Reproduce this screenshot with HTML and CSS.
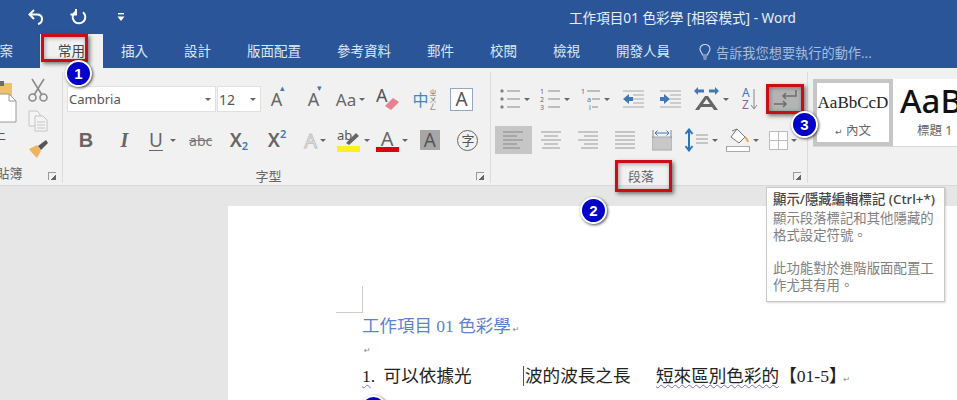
FILE: index.html
```html
<!DOCTYPE html>
<html lang="zh-Hant">
<head>
  <meta charset="UTF-8" />
  <title>工作項目01 色彩學 - Word</title>
  <link rel="stylesheet" href="styles.css">
</head>
<body>

  <header class="titlebar">
    <svg class="qat-undo" width="18" height="18" viewBox="0 0 18 18" fill="none" stroke="#fff" stroke-width="2"><path d="M7 2 L2.5 6.5 L7 11"/><path d="M3 6.5 H10 C14 6.5 15 9 15 11 C15 13.5 13.5 15.5 11 16"/></svg>
    <svg class="qat-redo" width="18" height="18" viewBox="0 0 18 18" fill="none" stroke="#fff" stroke-width="2"><path d="M5.5 3.8 A6.3 6.3 0 1 0 13 4.2"/><path d="M7 1 V6.5 H1.5" transform="translate(-1 0)"/></svg>
    <svg class="qat-more" width="8" height="9" viewBox="0 0 8 9" fill="#fff"><rect x="1" y="0" width="6" height="1.4"/><path d="M0.5 3.5 H7.5 L4 8 Z"/></svg>
    <div class="doc-title">工作項目01 色彩學 [相容模式] - Word</div>
  </header>

  <nav class="tabs">
    <span class="tab tab-file">檔案</span>
    <span class="tab active">常用</span>
    <span class="tab">插入</span>
    <span class="tab">設計</span>
    <span class="tab">版面配置</span>
    <span class="tab">參考資料</span>
    <span class="tab">郵件</span>
    <span class="tab">校閱</span>
    <span class="tab">檢視</span>
    <span class="tab">開發人員</span>
    <span class="tell">
      <svg width="12" height="17" viewBox="0 0 12 17" fill="none" stroke="#c3d0e4" stroke-width="1.2"><path d="M3.5 11 C3 8.5 1 7.5 1 5 A5 4.5 0 0 1 11 5 C11 7.5 9 8.5 8.5 11 Z"/><path d="M4 13 H8 M4.5 15 H7.5"/></svg>
      告訴我您想要執行的動作...
    </span>
  </nav>

  <section class="ribbon">

    <div class="group group-clip">
      <div class="clip-body">
        <div class="paste">
          <svg width="37" height="42" viewBox="0 0 37 42"><rect x="2" y="2" width="30" height="30" fill="#eec06a"/><rect x="16" y="0" width="8" height="5" fill="#6b6b6b"/><path d="M8 13 H29 L36 20 V41 H8 Z" fill="#fff" stroke="#9a9a9a"/><path d="M29 13 V20 H36" fill="none" stroke="#9a9a9a"/></svg>
          <span>貼上</span>
        </div>
        <div class="clip-tools">
          <svg width="20" height="24" viewBox="0 0 20 24" fill="none" stroke="#8b8b8b" stroke-width="1.6"><path d="M4 1 L14 17 M16 1 L6 17"/><circle cx="4.5" cy="19.5" r="3.5"/><circle cx="15.5" cy="19.5" r="3.5"/></svg>
          <svg width="20" height="22" viewBox="0 0 20 22" fill="#f4f4f4" stroke="#c4c4c4"><path d="M1 1 H9 L12 4 V16 H1 Z"/><path d="M7 6 H15 L19 10 V21 H7 Z"/><path d="M9 12 H17 M9 15 H17 M9 18 H17"/></svg>
          <svg width="20" height="19" viewBox="0 0 20 19"><path d="M1 9 L9 5 L13 11 L9 18 C6 15 3 12 1 9 Z" fill="#eeb55f"/><path d="M10 6 L18 0 L20 3 L13 10 Z" fill="#555"/></svg>
        </div>
      </div>
      <div class="group-label label-clip">剪貼簿</div>
      <i class="launcher"></i>
    </div>

    <div class="group group-font">
      <div class="row">
        <div class="combo combo-name">Cambria<i class="caret"></i></div>
        <div class="combo combo-size">12<i class="caret"></i></div>
        <span class="tool glyph big">A<sup class="mark-up">▴</sup></span>
        <span class="tool glyph big">A<sup class="mark-down">▾</sup></span>
        <span class="tool glyph">Aa<i class="caret"></i></span>
        <span class="tool">
          <svg width="24" height="24" viewBox="0 0 24 24"><text x="0" y="15" font-size="18" fill="#555" font-family="Noto Sans">A</text><path d="M9 19 L17 11 L23 15 L15 23 Z" fill="#e97f90"/></svg>
        </span>
        <span class="tool ruby">中<small>ㄓㄨㄥ</small></span>
        <span class="tool"><span class="boxed-a">A</span></span>
      </div>
      <div class="row row-eleven">
        <span class="tool glyph strong">B</span>
        <span class="tool glyph strong slant">I</span>
        <span class="tool glyph under">U<i class="caret"></i></span>
        <span class="tool strike">abc</span>
        <span class="tool glyph strong-x">X<sub>2</sub></span>
        <span class="tool glyph strong-x">X<sup>2</sup></span>
        <span class="tool glyph ghost">A<i class="caret"></i></span>
        <span class="tool">
          <svg width="24" height="24" viewBox="0 0 24 24"><text x="0" y="12" font-size="13" fill="#555" font-family="Noto Sans">ab</text><path d="M9 15 L19 5 L22 8 L12 17 Z" fill="#666"/><rect x="0" y="18" width="23" height="6" fill="#ffef1e"/></svg>
          <i class="caret"></i>
        </span>
        <span class="tool color-a"><span class="color-a-bar">A</span><i class="caret"></i></span>
        <span class="tool"><span class="shade-a">A</span></span>
        <span class="tool"><span class="circle-char">字</span></span>
      </div>
      <div class="group-label">字型</div>
      <i class="launcher"></i>
    </div>

    <div class="group group-para">
      <div class="row">
        <span class="tool w40">
          <svg width="21" height="24" viewBox="0 0 21 24" fill="#666" stroke="#888"><circle cx="2" cy="4" r="1.2"/><circle cx="2" cy="12" r="1.2"/><circle cx="2" cy="20" r="1.2"/><path d="M7 4 H20 M7 12 H20 M7 20 H20"/></svg>
          <i class="caret"></i>
        </span>
        <span class="tool w40">
          <svg width="21" height="24" viewBox="0 0 21 24" fill="none" stroke="#888"><path d="M8 4 H20 M8 12 H20 M8 20 H20"/><text x="0" y="7" font-size="7" fill="#666" stroke="none">1</text><text x="0" y="15" font-size="7" fill="#666" stroke="none">2</text><text x="0" y="23" font-size="7" fill="#666" stroke="none">3</text></svg>
          <i class="caret"></i>
        </span>
        <span class="tool w40">
          <svg width="20" height="24" viewBox="0 0 20 24" fill="none" stroke="#888"><path d="M6 4 H19 M11 12 H19 M11 20 H17"/><text x="0" y="7" font-size="7" fill="#666" stroke="none">1</text><text x="6" y="15" font-size="7" fill="#3f78b5" stroke="none">a</text><text x="8" y="23" font-size="7" fill="#666" stroke="none">i</text></svg>
          <i class="caret"></i>
        </span>
        <span class="tool">
          <svg width="21" height="18" viewBox="0 0 21 18" fill="none" stroke="#a8a8a8"><path d="M0 1 H21 M10 5 H21 M10 9 H21 M10 13 H21 M0 17 H21"/><path d="M0 9 L6 4 V7 H10 V11 H6 V14 Z" fill="#3f78b5" stroke="none"/></svg>
        </span>
        <span class="tool">
          <svg width="21" height="18" viewBox="0 0 21 18" fill="none" stroke="#a8a8a8"><path d="M0 1 H21 M10 5 H21 M10 9 H21 M10 13 H21 M0 17 H21"/><path d="M10 9 L4 4 V7 H0 V11 H4 V14 Z" fill="#3f78b5" stroke="none"/></svg>
        </span>
        <span class="tool w44">
          <svg width="27" height="24" viewBox="0 0 27 24"><path d="M2 23 L12 9 H15 L25 23 H21 L19 20 H8 L6 23 Z M10 17 H17 L13.5 12 Z" fill="#666" fill-rule="evenodd"/><path d="M1 4 L5 0 V2.5 H11 V5.5 H5 V8 Z M26 4 L22 0 V2.5 H16 V5.5 H22 V8 Z" fill="#3f78b5"/></svg>
          <i class="caret"></i>
        </span>
        <span class="tool w33">
          <svg width="16" height="24" viewBox="0 0 16 24" fill="none"><text x="0" y="10" font-size="12" fill="#3f78b5" font-family="Noto Sans">A</text><text x="0" y="22" font-size="12" fill="#8e5f9e" font-family="Noto Sans">Z</text><path d="M12 2 V21 M9 18 L12 22 L15 18" stroke="#888"/></svg>
        </span>
        <span class="tool tool-on">
          <svg width="24" height="20" viewBox="0 0 24 20" fill="none" stroke="#6e6e6e" stroke-width="1.5"><path d="M23 1 V7 H10 M13 4 L10 7 L13 10"/><path d="M1 15 H13 M10 12 L13 15 L10 18"/></svg>
        </span>
      </div>
      <div class="row">
        <span class="tool selected">
          <svg width="21" height="18" viewBox="0 0 21 18" stroke="#888"><path d="M0 1 H20 M0 5 H14 M0 9 H20 M0 13 H14 M0 17 H17"/></svg>
        </span>
        <span class="tool">
          <svg width="20" height="18" viewBox="0 0 20 18" stroke="#999"><path d="M0 1 H20 M3 5 H17 M0 9 H20 M3 13 H17 M1 17 H19"/></svg>
        </span>
        <span class="tool">
          <svg width="20" height="18" viewBox="0 0 20 18" stroke="#999"><path d="M0 1 H20 M6 5 H20 M0 9 H20 M6 13 H20 M3 17 H20"/></svg>
        </span>
        <span class="tool">
          <svg width="20" height="18" viewBox="0 0 20 18" stroke="#999"><path d="M0 1 H20 M0 5 H20 M0 9 H20 M0 13 H20 M0 17 H20"/></svg>
        </span>
        <span class="tool">
          <svg width="20" height="22" viewBox="0 0 20 22" fill="none"><rect x="0" y="8" width="20" height="13" fill="#c8c8c8" stroke="#aaa"/><path d="M1 9 V1 M19 9 V1" stroke="#888"/><path d="M3 4 H17 M5.5 1.5 L3 4 L5.5 6.5 M14.5 1.5 L17 4 L14.5 6.5" stroke="#3f78b5"/></svg>
        </span>
        <span class="tool w42">
          <svg width="24" height="24" viewBox="0 0 24 24" fill="none"><path d="M4 2 V22 M0.5 6 L4 1.5 L7.5 6 M0.5 18 L4 22.5 L7.5 18" stroke="#2e74b5" stroke-width="2"/><path d="M11 7 H23 M11 11 H23 M11 15 H23" stroke="#999"/></svg>
          <i class="caret"></i>
        </span>
        <span class="tool w40">
          <svg width="24" height="24" viewBox="0 0 24 24" fill="none"><path d="M11 1 L19 9 L13 15 L5 9 Z" fill="#fff" stroke="#777"/><path d="M6 3 L11 1" stroke="#777"/><path d="M19 9 C21 11 22 12 22 14" stroke="#e5a950" stroke-width="2"/><rect x="0.5" y="18.5" width="23" height="5" fill="#fff" stroke="#aaa"/></svg>
          <i class="caret"></i>
        </span>
        <span class="tool w41">
          <svg width="19" height="19" viewBox="0 0 19 19" fill="#fff" stroke="#bcbcbc"><rect x="0.5" y="0.5" width="18" height="18"/><path d="M9.5 0 V19 M0 9.5 H19"/></svg>
          <i class="caret"></i>
        </span>
      </div>
      <div class="group-label">段落</div>
      <i class="launcher"></i>
    </div>

    <div class="group-styles">
      <div class="gallery">
        <div class="style-card current">
          <div class="sample-normal">AaBbCcD</div>
          <div class="style-name"><span class="return">↵</span> 內文</div>
        </div>
        <div class="style-card">
          <div class="sample-heading">AaBl</div>
          <div class="style-name heading-name">標題 1</div>
        </div>
      </div>
    </div>

  </section>

  <main class="workspace">
    <article class="page">
      <i class="crop-mark"></i>
      <h1 class="doc-heading">工作項目 01 色彩學<span class="pmark">↵</span></h1>
      <p class="doc-empty"><span class="pmark">↵</span></p>
      <p class="doc-line">
        <span class="list-no"><span class="wavy">1</span>.</span> 可以依據光
        <span class="after-gap">波的波長之長</span>
        <span class="after-gap-small"><span class="wavy">短來區別色彩的</span>【01-5】<span class="pmark tight">↵</span></span>
      </p>
      <div class="badge badge-4"></div>
    </article>
  </main>

  <!-- annotations on top of the screenshot -->
  <div class="red-box box-tab"></div>
  <div class="red-box box-para"></div>
  <div class="red-box box-mark"></div>
  <div class="badge badge-1">1</div>
  <div class="badge badge-2">2</div>
  <div class="badge badge-3">3</div>

  <div class="tooltip">
    <div class="tooltip-title">顯示/隱藏編輯標記 (Ctrl+*)</div>
    <p>顯示段落標記和其他隱藏的格式設定符號。</p>
    <p>此功能對於進階版面配置工作尤其有用。</p>
  </div>

</body>
</html>
```

FILE: styles.css
```css
html,
body {
  margin: 0;
  height: 400px;
  overflow: hidden;
}

body {
  position: relative;
  font-family: "Noto Sans", "Noto Sans CJK TC", sans-serif;
  font-size: 13px;
  background-color: #e6e6e6;
  color: #555;
}

/* title bar */
.titlebar {
  height: 34px;
  display: flex;
  align-items: center;
  background-color: #2a5699;
  color: #e8eef7;
}

.qat-undo {
  margin-left: 27px;
}

.qat-redo {
  margin-left: 25px;
}

.qat-more {
  margin-left: 29px;
}

.doc-title {
  margin-left: 444px;
  font-size: 13.6px;
  white-space: nowrap;
}

/* tabs */
.tabs {
  height: 34px;
  display: flex;
  align-items: center;
  background-color: #2a5699;
  color: #dfe7f2;
  font-size: 13.5px;
  white-space: nowrap;
}

.tab {
  height: 34px;
  line-height: 35px;
  padding: 0 18px;
}

.tab-file {
  margin-left: -32px;
  margin-right: 9px;
}

.tab.active {
  background-color: #f1f1f1;
  color: #444;
}

.tell {
  display: flex;
  align-items: center;
  gap: 5px;
  margin-left: 11px;
  padding-top: 2px;
  color: #a9bcd8;
  font-size: 13.2px;
}

/* ribbon */
.ribbon {
  height: 117px;
  display: flex;
  background-color: #f1f1f1;
  border-bottom: 1px solid #d8d8d8;
}

.group {
  position: relative;
  display: flex;
  flex-direction: column;
  box-sizing: border-box;
  margin: 4px 0 2px;
  padding-top: 13px;
  border-right: 1px solid #dcdcdc;
}

.group-clip {
  width: 83px;
  margin-left: -20px;
  padding-top: 0;
}

.group-font {
  width: 428px;
  padding-left: 4px;
}

.group-para {
  width: 317px;
  padding-left: 4px;
}

.group-label {
  margin-top: auto;
  padding: 0 20px 1px 0;
  text-align: center;
  color: #666;
  line-height: 18px;
}

.label-clip {
  padding-right: 36px;
}

.launcher {
  position: absolute;
  right: 6px;
  bottom: 3px;
  width: 7px;
  height: 7px;
  border-left: 1px solid #999;
  border-top: 1px solid #999;
  background: linear-gradient(135deg, transparent 60%, #666 60%);
}

.row {
  display: flex;
  align-items: center;
  height: 28px;
  margin-bottom: 13px;
}

.row-eleven {
  display: grid;
  grid-template-columns: repeat(11, 38.2px);
}

.tool {
  width: 37px;
  height: 28px;
  display: flex;
  align-items: center;
  justify-content: center;
  gap: 3px;
  flex-shrink: 0;
}

.row-eleven .tool {
  width: auto;
}

.w33 { width: 33px; }
.w40 { width: 40px; }
.w41 { width: 41px; }
.w42 { width: 42px; }
.w44 { width: 44px; }

.tool.selected {
  background-color: #c6c6c6;
}

.tool.tool-on {
  background-color: #b4b4b4;
}

.caret {
  display: inline-block;
  width: 0;
  height: 0;
  border-left: 3px solid transparent;
  border-right: 3px solid transparent;
  border-top: 3px solid #666;
  flex-shrink: 0;
}

/* clipboard */
.clip-body {
  display: flex;
  height: 96px;
}

.paste {
  width: 44px;
  padding-top: 9px;
  line-height: 18px;
}

.paste svg {
  display: block;
  margin-bottom: 2px;
}

.clip-tools {
  display: flex;
  flex-direction: column;
  align-items: center;
  gap: 8px;
  margin-left: 4px;
  padding-top: 6px;
}

/* font group */
.combo {
  height: 26px;
  box-sizing: border-box;
  display: flex;
  align-items: center;
  justify-content: space-between;
  padding: 0 4px 0 1px;
  background-color: #fff;
  border: 1px solid #e0e0e0;
  color: #555;
  font-size: 13px;
}

.combo-name {
  width: 149px;
  margin-right: 1px;
}

.combo-size {
  width: 44px;
  margin-right: -3px;
  font-size: 14px;
}

.glyph {
  color: #666;
  font-size: 17px;
}

.big {
  position: relative;
  font-size: 18px;
}

.mark-up,
.mark-down {
  position: absolute;
  top: -2px;
  left: 22px;
  font-size: 9px;
  color: #3f78b5;
  line-height: 10px;
}

.strong {
  font-family: "Liberation Sans", sans-serif;
  font-weight: bold;
  font-size: 20px;
}

.slant {
  font-family: "Liberation Serif", serif;
  font-style: italic;
}

.under {
  gap: 7px;
  font-size: 19px;
  text-decoration: underline;
  text-underline-offset: 3px;
}

.strike {
  color: #777;
  font-size: 14px;
  text-decoration: line-through;
}

.strong-x {
  font-weight: 600;
  font-size: 19px;
  gap: 0;
}

.strong-x sub,
.strong-x sup {
  color: #3f78b5;
  font-size: 11px;
  line-height: 12px;
}

.strong-x sub {
  align-self: flex-end;
  margin-bottom: 2px;
}

.strong-x sup {
  align-self: flex-start;
  margin-top: 2px;
}

.ghost {
  color: #f1f1f1;
  font-size: 20px;
  -webkit-text-stroke: 1px #c4c4c4;
}

.color-a {
  color: #666;
  font-size: 20px;
}

.color-a-bar {
  width: 23px;
  height: 24px;
  line-height: 21px;
  box-sizing: border-box;
  text-align: center;
  border-bottom: 5px solid #e00000;
}

.ruby {
  color: #3f8ab5;
  font-size: 16px;
  gap: 1px;
}

.ruby small {
  width: 7px;
  font-size: 7px;
  line-height: 7px;
  color: #666;
}

.boxed-a {
  width: 21px;
  height: 21px;
  line-height: 21px;
  text-align: center;
  border: 1px solid #93a7c3;
  background-color: #fff;
  color: #555;
  font-size: 19px;
}

.shade-a {
  width: 20px;
  height: 20px;
  line-height: 20px;
  text-align: center;
  background-color: #a6a6a6;
  color: #555;
  font-size: 19px;
}

.circle-char {
  width: 19px;
  height: 19px;
  line-height: 18px;
  text-align: center;
  border: 1px solid #666;
  border-radius: 50%;
  color: #555;
  font-size: 13px;
}

/* styles gallery */
.group-styles {
  padding: 11px 0 0 5px;
  flex: 1;
  min-width: 0;
}

.gallery {
  display: flex;
  height: 67px;
  background-color: #fff;
  border-bottom: 1px solid #d8d8d8;
  overflow: hidden;
}

.style-card {
  width: 72px;
  flex-shrink: 0;
  text-align: center;
}

.style-card.current {
  width: 80px;
  box-sizing: border-box;
  border: 4px solid #c6c6c6;
}

.sample-normal {
  height: 37px;
  line-height: 40px;
  font-family: "Liberation Serif", serif;
  font-size: 17px;
  color: #222;
  white-space: nowrap;
}

.sample-heading {
  height: 41px;
  line-height: 44px;
  font-size: 33px;
  font-weight: 500;
  color: #111;
  white-space: nowrap;
  text-align: left;
  padding-left: 7px;
}

.style-name {
  color: #666;
  font-size: 12.5px;
  white-space: nowrap;
}

.heading-name {
  text-align: left;
  padding-left: 24px;
}

.return {
  font-family: "DejaVu Sans", sans-serif;
  font-size: 9px;
}

/* document area */
.workspace {
  height: 214px;
  box-sizing: border-box;
  padding: 20px 0 0 228px;
}

.page {
  position: relative;
  height: 194px;
  box-sizing: border-box;
  padding: 109px 0 0 134px;
  background-color: #fff;
  color: #222;
  overflow: hidden;
}

.crop-mark {
  position: absolute;
  left: 108px;
  top: 80px;
  width: 26px;
  height: 26px;
  border-right: 1px solid #ccc;
  border-bottom: 1px solid #ccc;
}

.doc-heading {
  margin: 0 0 3px;
  font-size: 17.5px;
  font-weight: normal;
  line-height: 22px;
  color: #5b83cf;
  font-family: "Liberation Serif", "Noto Sans CJK TC", serif;
  white-space: nowrap;
}

.doc-empty {
  margin: 0 0 9px;
  line-height: 16px;
}

.doc-line {
  margin: 0;
  font-size: 17.6px;
  line-height: 22px;
  white-space: nowrap;
  font-family: "Liberation Serif", "Noto Sans CJK TC", serif;
}

.list-no {
  margin-right: 4px;
}

.after-gap {
  margin-left: 47px;
  padding-left: 1px;
  border-left: 1px solid #555;
}

.after-gap-small {
  margin-left: 21px;
}

.wavy {
  text-decoration: underline wavy #7a6fd0 1px;
  text-underline-offset: 2px;
}

.pmark {
  margin-left: 2px;
  color: #888;
  font-family: "DejaVu Sans", sans-serif;
  font-size: 8px;
  line-height: 1;
}

.pmark.tight {
  margin-left: -3px;
}

/* annotations */
.red-box {
  position: absolute;
  box-sizing: border-box;
  border: 3px solid #cc0d14;
  box-shadow: 2px 2px 4px rgba(0,0,0,0.5), inset 1px 1px 4px rgba(0,0,0,0.35);
}

.box-tab {
  left: 41px;
  top: 34px;
  width: 47px;
  height: 28px;
}

.box-para {
  left: 615px;
  top: 160px;
  width: 57px;
  height: 32px;
}

.box-mark {
  left: 766px;
  top: 84px;
  width: 38px;
  height: 30px;
}

.badge {
  position: absolute;
  box-sizing: border-box;
  width: 27px;
  height: 27px;
  line-height: 23px;
  text-align: center;
  border: 2px solid #fff;
  border-radius: 50%;
  background-color: #0000c8;
  box-shadow: 1px 1px 3px rgba(0,0,0,0.7);
  color: #fff;
  font-family: "Liberation Sans", sans-serif;
  font-size: 15px;
  font-weight: bold;
}

.badge-1 { left: 65px; top: 60px; }
.badge-2 { left: 580px; top: 197px; }
.badge-3 { left: 791px; top: 111px; }
.badge-4 { left: 132px; top: 189px; }

.tooltip {
  position: absolute;
  left: 766px;
  top: 187px;
  width: 179px;
  height: 115px;
  box-sizing: border-box;
  padding: 3px 6px;
  background-color: #fff;
  border: 1px solid #c8c8c8;
  box-shadow: 1px 1px 2px rgba(0,0,0,0.15);
  font-size: 13.4px;
  line-height: 17px;
  color: #808080;
}

.tooltip-title {
  margin-bottom: 2px;
  color: #444;
  font-weight: 500;
  white-space: nowrap;
}

.tooltip p {
  margin: 0 0 16px;
}
```
